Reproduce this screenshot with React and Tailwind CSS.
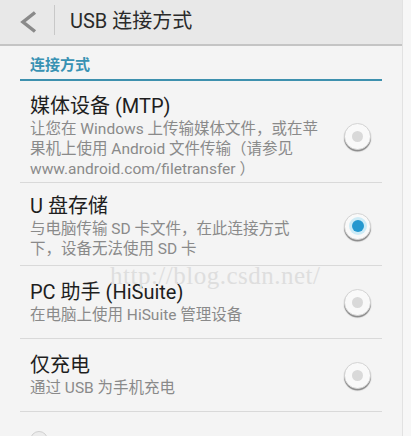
import React from 'react';

const options = [
  {
    title: '媒体设备 (MTP)',
    lines: ['让您在 Windows 上传输媒体文件，或在苹', '果机上使用 Android 文件传输（请参见', 'www.android.com/filetransfer ）'],
    pad: 'pt-[12px] pb-[3px]',
    checked: false,
  },
  {
    title: 'U 盘存储',
    lines: ['与电脑传输 SD 卡文件，在此连接方式', '下，设备无法使用 SD 卡'],
    pad: 'pt-[10px] pb-[6px]',
    checked: true,
  },
  {
    title: 'PC 助手 (HiSuite)',
    lines: ['在电脑上使用 HiSuite 管理设备'],
    pad: 'pt-[13px] pb-[13px]',
    checked: false,
  },
  {
    title: '仅充电',
    lines: ['通过 USB 为手机充电'],
    pad: 'pt-[13px] pb-[13px]',
    checked: false,
  },
];

const Radio = ({ checked }) => (
  <div className="shrink-0 w-[27px] h-[27px] rounded-full bg-[#f9f9f9] border border-[#d4d4d4] shadow-[0_1.5px_1px_rgba(0,0,0,0.45)] flex items-center justify-center">
    {checked ? (
      <div className="w-[12px] h-[12px] rounded-full bg-[#2598cf] shadow-[0_0_0_3px_#cdebf6]" />
    ) : (
      <div className="w-[11px] h-[11px] rounded-full bg-[#d9d9d9]" />
    )}
  </div>
);

const App = () => {
  return (
    <div className="relative flex w-[411px] h-[436px] overflow-hidden bg-[#f4f4f4] font-['Roboto','Noto_Sans_CJK_SC',sans-serif]">
      <div className="w-[403px] shrink-0 border-r border-[#e2e2e2]">
        {/* Header */}
        <div className="h-[46px] flex items-center bg-[#e8e8e8] border-b-2 border-[#c4c4c4]">
          <div className="w-[54px] flex justify-center pl-[3px]">
            <svg width="18" height="22" viewBox="0 0 18 22">
              <polyline points="15,1.5 3,11 15,20.5" fill="none" stroke="#8a8a8a" strokeWidth="3.5" />
            </svg>
          </div>
          <div className="w-px h-[30px] bg-[#c8c8c8] mb-[4px]" />
          <div className="pl-[15px] text-[20px] leading-[26px] text-[#2a2a2a] pb-[3px]">USB 连接方式</div>
        </div>

        <div className="mx-[20px]">
          {/* Section header */}
          <div className="pl-[10px] pt-[9px] pb-[4px] text-[15px] leading-[20px] font-bold text-[#3892b3] border-b-2 border-[#3d90ae]">
            连接方式
          </div>

          {options.map((opt) => (
            <div key={opt.title} className={`flex items-center border-b border-[#d9d9d9] pl-[10px] pr-[11px] ${opt.pad}`}>
              <div className="flex-1">
                <div className="text-[20px] leading-[26px] text-[#1e1e1e]">{opt.title}</div>
                <div className="text-[15.5px] leading-[20px] text-[#8a8a8a]">
                  {opt.lines.map((l) => (
                    <div key={l}>{l}</div>
                  ))}
                </div>
              </div>
              <Radio checked={opt.checked} />
            </div>
          ))}

          <div className="pl-[10px] pt-[19px]">
            <div className="w-[18px] h-[18px] rounded-full bg-[#ececec] border border-[#d0d0d0]" />
          </div>
        </div>
      </div>
      <div className="flex-1 bg-[#f7f7f7]" />

      {/* watermark */}
      <div className="absolute left-[110px] top-[263px] text-[25px] leading-none tracking-[0.5px] text-[#dedede] font-['Liberation_Serif',serif] pointer-events-none">
        http://blog.csdn.net/
      </div>
    </div>
  );
};

export default App;
